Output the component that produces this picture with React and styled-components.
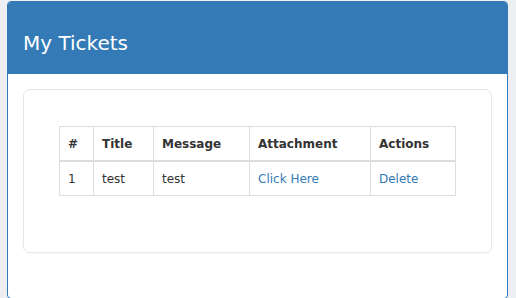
import styled, { createGlobalStyle } from "styled-components";

const GlobalStyle = createGlobalStyle`
  html, body {
    margin: 0;
    padding: 0;
    height: 298px;
    overflow: hidden;
    background: #edeff3;
    font-family: "DejaVu Sans", "Liberation Sans", sans-serif;
    color: #333;
  }
`;

const Panel = styled.section`
  margin: 1px 8px 0 7px;
  border: 1px solid #337ab7;
  border-radius: 4px;
  background: #fff;
  overflow: hidden;
`;

const Heading = styled.header`
  background: #337ab7;
  color: #fff;
  padding: 30px 15px 20px;
  h3 {
    margin: 0;
    font-size: 20px;
    font-weight: normal;
    line-height: 22px;
  }
`;

const Body = styled.div`
  padding: 15px 15px 45px;
`;

const Card = styled.div`
  border: 1px solid #e6e6e6;
  border-radius: 7px;
  box-shadow: 0 1px 2px rgba(0, 0, 0, 0.04);
  padding: 36px 35px 56px 35px;
`;

const Table = styled.table`
  width: 100%;
  border-collapse: collapse;
  font-size: 12px;
  line-height: 17px;
  th, td {
    border: 1px solid #ddd;
    padding: 9px 8px 7px;
    text-align: left;
  }
  th {
    font-weight: bold;
    border-bottom-width: 2px;
  }
  a {
    color: #337ab7;
    text-decoration: none;
  }
`;

const Col = styled.th`
  width: ${(p) => p.w}px;
`;

const tickets = [{ id: 1, title: "test", message: "test" }];

export default function App() {
  return (
    <>
      <GlobalStyle />
      <Panel>
        <Heading>
          <h3>My Tickets</h3>
        </Heading>
        <Body>
          <Card>
            <Table>
              <thead>
                <tr>
                  <Col w={17}>#</Col>
                  <Col w={43}>Title</Col>
                  <Col w={79}>Message</Col>
                  <Col w={104}>Attachment</Col>
                  <th>Actions</th>
                </tr>
              </thead>
              <tbody>
                {tickets.map((t) => (
                  <tr key={t.id}>
                    <td>{t.id}</td>
                    <td>{t.title}</td>
                    <td>{t.message}</td>
                    <td><a href="#">Click Here</a></td>
                    <td><a href="#">Delete</a></td>
                  </tr>
                ))}
              </tbody>
            </Table>
          </Card>
        </Body>
      </Panel>
    </>
  );
}
